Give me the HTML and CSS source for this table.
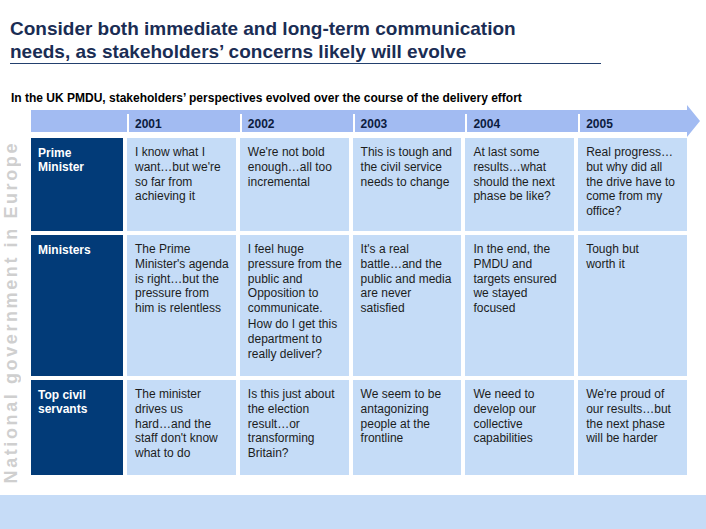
FILE: index.html
```html
<!DOCTYPE html>
<html lang="en">
<head>
<meta charset="utf-8">
<title>Stakeholder perspectives</title>
<link rel="stylesheet" href="styles.css">
</head>
<body>
  <header class="title-block">
    <h1 class="title">Consider both immediate and long-term communication<br>needs, as stakeholders’ concerns likely will evolve</h1>
  </header>
  <p class="subtitle">In the UK PMDU, stakeholders’ perspectives evolved over the course of the delivery effort</p>
  <section class="main">
    <div class="side"><span class="side-text">National government in Europe</span></div>
    <div class="board">
      <div class="timeline">
        <div class="years">
          <div class="year-spacer"></div>
          <div class="year">2001</div>
          <div class="year">2002</div>
          <div class="year">2003</div>
          <div class="year">2004</div>
          <div class="year">2005</div>
        </div>
        <svg class="tip" width="13" height="32" viewBox="0 0 13 32"><polygon points="0,0 13,16 0,32" fill="#a2bbf2"/></svg>
      </div>
      <div class="grid">
        <div class="label">Prime<br>Minister</div>
        <div class="cell">I know what I<br>want…but we're<br>so far from<br>achieving it</div>
        <div class="cell">We're not bold<br>enough…all too<br>incremental</div>
        <div class="cell">This is tough and<br>the civil service<br>needs to change</div>
        <div class="cell">At last some<br>results…what<br>should the next<br>phase be like?</div>
        <div class="cell">Real progress…<br>but why did all<br>the drive have to<br>come from my<br>office?</div>

        <div class="label">Ministers</div>
        <div class="cell">The Prime<br>Minister's agenda<br>is right…but the<br>pressure from<br>him is relentless</div>
        <div class="cell">I feel huge<br>pressure from the<br>public and<br>Opposition to<br>communicate.<br><span class="para">How do I get this<br>department to<br>really deliver?</span></div>
        <div class="cell">It's a real<br>battle…and the<br>public and media<br>are never<br>satisfied</div>
        <div class="cell">In the end, the<br>PMDU and<br>targets ensured<br>we stayed<br>focused</div>
        <div class="cell">Tough but<br>worth it</div>

        <div class="label">Top civil<br>servants</div>
        <div class="cell">The minister<br>drives us<br>hard…and the<br>staff don't know<br>what to do</div>
        <div class="cell">Is this just about<br>the election<br>result…or<br>transforming<br>Britain?</div>
        <div class="cell">We seem to be<br>antagonizing<br>people at the<br>frontline</div>
        <div class="cell">We need to<br>develop our<br>collective<br>capabilities</div>
        <div class="cell">We're proud of<br>our results…but<br>the next phase<br>will be harder</div>
      </div>
    </div>
  </section>
  <footer class="band"></footer>
</body>
</html>
```
FILE: styles.css
```css
html, body {
  margin: 0;
  padding: 0;
}

body {
  width: 706px;
  height: 529px;
  overflow: hidden;
  display: flex;
  flex-direction: column;
  background: #ffffff;
  font-family: "Liberation Sans", Arial, sans-serif;
}

.title-block {
  padding: 17px 0 0 10px;
}

.title {
  margin: 0;
  width: 591px;
  font-size: 19px;
  line-height: 23px;
  font-weight: bold;
  color: #1a2d54;
  border-bottom: 1px solid #23406e;
}

.subtitle {
  margin: 27px 0 0 11px;
  font-size: 12px;
  line-height: 14px;
  font-weight: bold;
  color: #000000;
}

.main {
  display: flex;
  margin-top: 5px;
}

.side {
  width: 31px;
  flex: none;
  display: flex;
  box-sizing: border-box;
}

.side-text {
  writing-mode: vertical-rl;
  transform: rotate(180deg);
  width: 22px;
  margin-top: 31px;
  font-size: 18px;
  line-height: 22px;
  font-weight: bold;
  letter-spacing: 2.6px;
  color: #cfcfcf;
  white-space: nowrap;
}

.board {
  width: 656px;
  display: flex;
  flex-direction: column;
}

.timeline {
  display: flex;
  align-items: center;
  height: 22px;
}

.years {
  flex: none;
  width: 656px;
  height: 22px;
  background: #a2bbf2;
  display: grid;
  grid-template-columns: 92px repeat(5, 1fr);
  column-gap: 4px;
  align-items: end;
}

.year {
  height: 18px;
  border-left: 2px solid #ffffff;
  padding-left: 6px;
  font-size: 12px;
  line-height: 21px;
  font-weight: bold;
  color: #0c1c40;
}

.tip {
  flex: none;
  display: block;
}

.grid {
  display: grid;
  grid-template-columns: 92px repeat(5, 1fr);
  grid-template-rows: 93px 141px 95px;
  gap: 4px;
  margin-top: 6px;
}

.label {
  background: #023b78;
  color: #ffffff;
  font-size: 12px;
  line-height: 14px;
  font-weight: bold;
  padding: 8px 4px 0 7px;
}

.cell {
  background: #c5dcf7;
  color: #1c1c1c;
  font-size: 12px;
  line-height: 14.8px;
  padding: 7px 2px 0 8px;
}

.para {
  display: inline-block;
  margin-top: 1px;
}

.band {
  margin-top: auto;
  height: 34px;
  background: #c6dcf7;
}
```
